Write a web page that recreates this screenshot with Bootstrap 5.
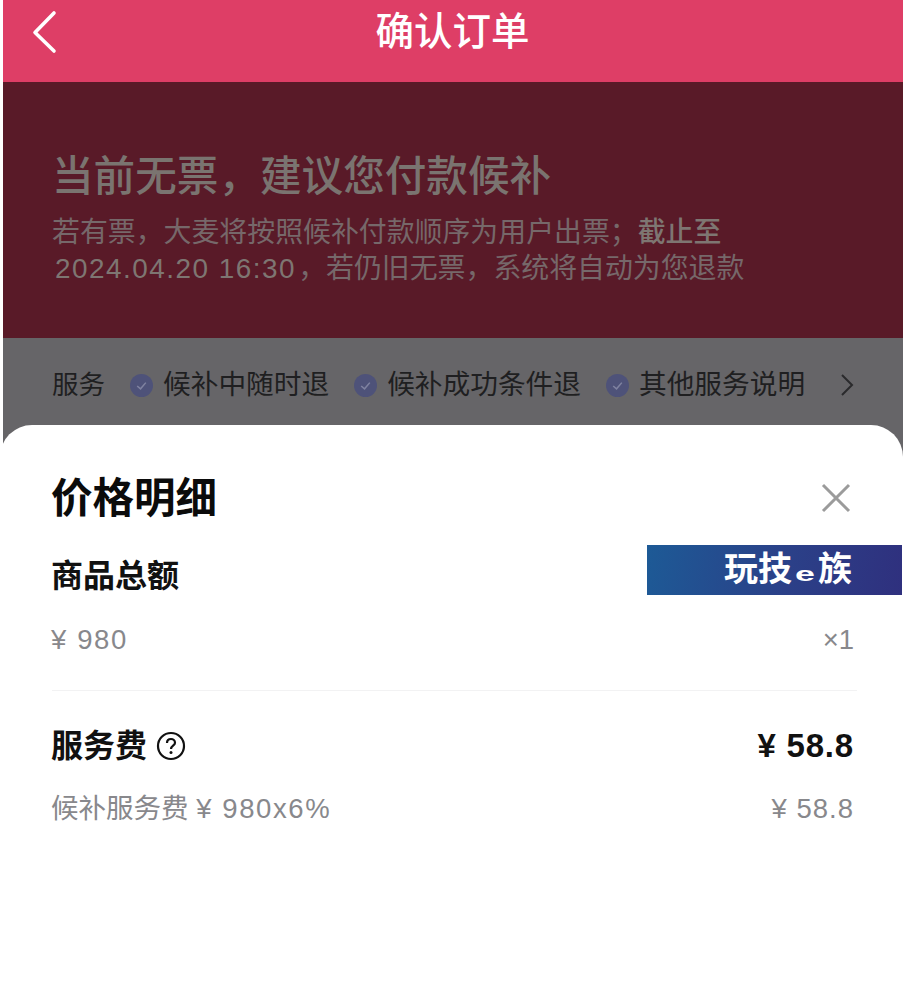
<!DOCTYPE html>
<html lang="zh">
<head>
<meta charset="utf-8">
<title>确认订单</title>
<link href="https://cdn.jsdelivr.net/npm/bootstrap@5.3.0/dist/css/bootstrap.min.css" rel="stylesheet">
<style>
html,body{margin:0;height:100%;background:#fff;}
body{font-family:"Liberation Sans","Noto Sans CJK SC",sans-serif;overflow:hidden;}
.phone{position:relative;width:903px;height:989px;padding-left:3px;overflow:hidden;background:#fff;}
.top-bar{height:82px;background:#de3e66;color:#fff;position:relative;}
.top-title{font-size:38.5px;font-weight:500;line-height:64px;margin-left:-1px;}
.back-icon{position:absolute;left:27px;top:10px;}
.hero{height:256px;background:#591a28;padding:71px 49px 0 49px;color:#7b6d6b;}
.hero-title{font-size:41.6px;line-height:48px;font-weight:500;color:#7a7470;}
.hero-sub{font-size:27.9px;line-height:36px;margin-top:14px;color:#76686a;width:740px;}
.hero-sub b{font-weight:500;color:#7e7672;}
.hero-date{color:#7e7672;letter-spacing:1.5px;padding-left:3px;padding-right:2px;}
.service-bar{height:580px;background:#666568;padding:27px 0 0 49px;color:#1f1f21;font-size:26.5px;line-height:40px;}
.svc-item{font-size:27.7px;}
.svc-list{gap:25px;margin-left:25px;}
.dot{width:23px;height:23px;flex:none;margin-right:10px;}
.chev{margin-left:35px;}
.sheet{position:absolute;left:0;right:0;top:425px;bottom:0;background:#fff;border-radius:32px 32px 0 0;padding:47px 49px 0 51px;}
.sheet-title{font-size:41.5px;line-height:54px;font-weight:700;color:#0b0b0b;}
.sec-title{font-size:32px;line-height:42px;font-weight:700;color:#111;margin-top:29px;}
.row-gray{font-size:27.5px;line-height:36px;color:#88888c;}
.gap-goods{margin-top:25px;}
.gap-fee{margin-top:24px;}
.wide-num{letter-spacing:1.6px;}
.wide-num-sm{letter-spacing:1px;}
.rule-line{height:1px;background:#f2f2f3;margin:32px -3px 0 1px;}
.price-strong{font-size:32px;line-height:42px;font-weight:700;color:#111;margin-top:34px;}
.price-num{font-size:33px;letter-spacing:.8px;}
.close-x{margin:0 3px 2px 0;}
.q-icon{margin-left:1px;}
.ad-strip{position:absolute;left:647px;top:545px;width:255px;height:50px;background:linear-gradient(100deg,#1d5a96 0%,#2b4088 55%,#2f307e 100%);color:#fff;font-size:34px;font-weight:700;line-height:48px;padding-left:77px;white-space:nowrap;}
.ad-e{display:inline-block;font-size:21px;font-weight:700;width:26px;text-align:center;transform:scaleX(1.700);line-height:1;}
</style>
</head>
<body>
<div class="phone">
  <div class="top-bar d-flex justify-content-center">
    <svg class="back-icon" width="28" height="44" viewBox="0 0 28 44"><path d="M24 3 5 22.500 24 41" fill="none" stroke="#fff" stroke-width="3.600" stroke-linecap="round" stroke-linejoin="round"/></svg>
    <div class="top-title">确认订单</div>
  </div>
  <div class="hero">
    <div class="hero-title">当前无票，建议您付款候补</div>
    <div class="hero-sub">若有票，大麦将按照候补付款顺序为用户出票；<b>截止至</b><br><span class="hero-date">2024.04.20 16:30</span>，若仍旧无票，系统将自动为您退款</div>
  </div>
  <div class="service-bar">
    <div class="d-flex align-items-center">
      <span>服务</span>
      <div class="svc-list d-flex align-items-center">
        <span class="svc-item d-flex align-items-center"><svg class="dot" viewBox="0 0 24 24"><circle cx="12" cy="12" r="12" fill="#4e5279"/><path d="M7.500 12.500 11 15.500 16.500 9" fill="none" stroke="#7f82a0" stroke-width="1.600"/></svg>候补中随时退</span>
        <span class="svc-item d-flex align-items-center"><svg class="dot" viewBox="0 0 24 24"><circle cx="12" cy="12" r="12" fill="#4e5279"/><path d="M7.500 12.500 11 15.500 16.500 9" fill="none" stroke="#7f82a0" stroke-width="1.600"/></svg>候补成功条件退</span>
        <span class="svc-item d-flex align-items-center"><svg class="dot" viewBox="0 0 24 24"><circle cx="12" cy="12" r="12" fill="#4e5279"/><path d="M7.500 12.500 11 15.500 16.500 9" fill="none" stroke="#7f82a0" stroke-width="1.600"/></svg>其他服务说明</span>
      </div>
      <svg class="chev" width="14" height="26" viewBox="0 0 14 26"><path d="M2 3 12 13 2 23" fill="none" stroke="#2a2a2c" stroke-width="2"/></svg>
    </div>
  </div>
  <div class="sheet">
    <div class="d-flex justify-content-between align-items-center">
      <div class="sheet-title">价格明细</div>
      <svg class="close-x" width="30" height="30" viewBox="0 0 30 30"><path d="M2 2 28 28M28 2 2 28" fill="none" stroke="#9b9b9b" stroke-width="3"/></svg>
    </div>
    <div class="sec-title">商品总额</div>
    <div class="row-gray gap-goods d-flex justify-content-between"><span class="wide-num">¥ 980</span><span>×1</span></div>
    <div class="rule-line"></div>
    <div class="d-flex justify-content-between align-items-center price-strong">
      <span class="d-flex align-items-center gap-2">服务费
        <svg class="q-icon" width="30" height="30" viewBox="0 0 30 30"><circle cx="15" cy="15" r="13" fill="none" stroke="#111" stroke-width="2.200"/><path d="M11 12c0-2.500 1.800-4 4-4s4 1.500 4 3.700c0 3-4 3-4 6.300" fill="none" stroke="#111" stroke-width="2.200"/><circle cx="15" cy="21.500" r="1.500" fill="#111"/></svg>
      </span>
      <span class="price-num">¥ 58.8</span>
    </div>
    <div class="row-gray gap-fee d-flex justify-content-between"><span>候补服务费 <span class="wide-num">¥ 980x6%</span></span><span class="wide-num-sm">¥ 58.8</span></div>
  </div>
  <div class="ad-strip">玩技<span class="ad-e">e</span>族</div>
</div>
</body>
</html>
